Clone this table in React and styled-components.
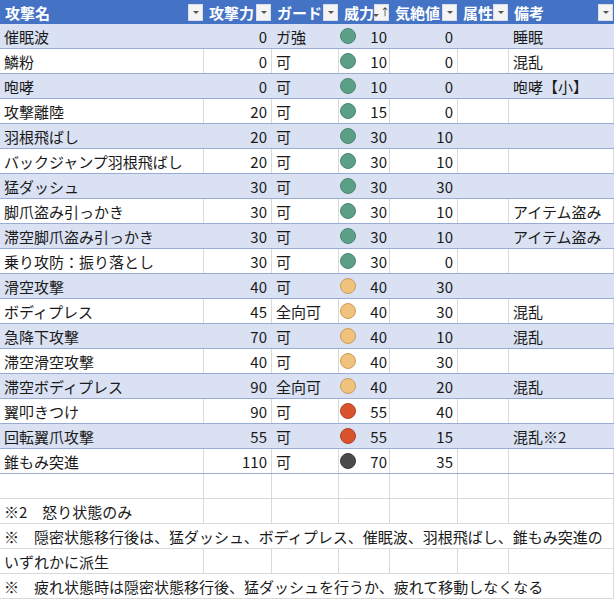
import React from "react";
import styled, { createGlobalStyle } from "styled-components";

const GlobalStyle = createGlobalStyle`
  body {
    margin: 0;
    background: #fff;
    font-family: "Noto Sans CJK JP", "Noto Sans", sans-serif;
  }
`;

const COLS = "204px 68px 67px 51px 68px 51px 105px";

const Sheet = styled.div`
  width: 614px;
  height: 600px;
  overflow: hidden;
  font-size: 15px;
  color: #1a1a1a;
`;

const HeaderRow = styled.div`
  display: grid;
  grid-template-columns: ${COLS};
  height: 24px;
  background: #4472c4;
`;

const HeadCell = styled.div`
  display: flex;
  align-items: center;
  justify-content: space-between;
  padding: 0 1px 0 5px;
  color: #fff;
  font-weight: bold;
  white-space: nowrap;
  overflow: hidden;
`;

const FilterButton = styled.span`
  flex: none;
  width: 15px;
  height: 17px;
  background: #f4f4f4;
  border: 1px solid #d8dde8;
  box-sizing: border-box;
  display: flex;
  align-items: center;
  justify-content: center;
  gap: 1px;
`;

const Tri = styled.span`
  width: 0;
  height: 0;
  border-left: 3px solid transparent;
  border-right: 3px solid transparent;
  border-top: 3px solid #555;
  margin-top: ${(p) => (p.$sort ? "6px" : "1px")};
`;

const SortArrow = styled.span`
  font-size: 10px;
  line-height: 1;
  color: #333;
  font-weight: normal;
  margin-top: -1px;
`;

const Row = styled.div`
  display: grid;
  grid-template-columns: ${COLS};
  height: 25px;
  box-sizing: border-box;
  background: ${(p) => (p.$band ? "#d9e1f2" : "#fff")};
  border-bottom: 1px solid ${(p) => (p.$plain ? "#d9d9d9" : "#98acd6")};
`;

const Cell = styled.div`
  display: flex;
  align-items: center;
  justify-content: ${(p) => (p.$num ? "flex-end" : "flex-start")};
  padding: 0 4px;
  white-space: nowrap;
  overflow: hidden;
  border-right: 1px solid ${(p) => (p.$band ? "transparent" : "#d9d9d9")};
  grid-column: ${(p) => p.$span || "auto"};
`;

const PowerCell = styled(Cell)`
  justify-content: space-between;
  padding: 0 2px 0 1px;
`;

const Dot = styled.span`
  width: 16px;
  height: 16px;
  border-radius: 50%;
  box-sizing: border-box;
  background: ${(p) => p.$fill};
  border: 1px solid ${(p) => p.$edge};
`;

const DOTS = {
  g: ["#5c9f87", "#4b8770"],
  y: ["#f1c27d", "#c99d5a"],
  r: ["#d9532f", "#b04325"],
  k: ["#4b4b4b", "#3a3a3a"],
};

const heads = ["攻撃名", "攻撃力", "ガード", "威力", "気絶値", "属性", "備考"];

const rows = [
  ["催眠波", 0, "ガ強", "g", 10, 0, "睡眠"],
  ["鱗粉", 0, "可", "g", 10, 0, "混乱"],
  ["咆哮", 0, "可", "g", 10, 0, "咆哮【小】"],
  ["攻撃離陸", 20, "可", "g", 15, 0, ""],
  ["羽根飛ばし", 20, "可", "g", 30, 10, ""],
  ["バックジャンプ羽根飛ばし", 20, "可", "g", 30, 10, ""],
  ["猛ダッシュ", 30, "可", "g", 30, 30, ""],
  ["脚爪盗み引っかき", 30, "可", "g", 30, 10, "アイテム盗み"],
  ["滞空脚爪盗み引っかき", 30, "可", "g", 30, 10, "アイテム盗み"],
  ["乗り攻防：振り落とし", 30, "可", "g", 30, 0, ""],
  ["滑空攻撃", 40, "可", "y", 40, 30, ""],
  ["ボディプレス", 45, "全向可", "y", 40, 30, "混乱"],
  ["急降下攻撃", 70, "可", "y", 40, 10, "混乱"],
  ["滞空滑空攻撃", 40, "可", "y", 40, 30, ""],
  ["滞空ボディプレス", 90, "全向可", "y", 40, 20, "混乱"],
  ["翼叩きつけ", 90, "可", "r", 55, 40, ""],
  ["回転翼爪攻撃", 55, "可", "r", 55, 15, "混乱※2"],
  ["錐もみ突進", 110, "可", "k", 70, 35, ""],
];

// null = text spills across the whole row
const notes = [
  "",
  "※2　怒り状態のみ",
  null,
  "いずれかに派生",
  null,
];
const longNotes = [
  "※　隠密状態移行後は、猛ダッシュ、ボディプレス、催眠波、羽根飛ばし、錐もみ突進の",
  "※　疲れ状態時は隠密状態移行後、猛ダッシュを行うか、疲れて移動しなくなる",
];

const EmptyCells = () =>
  heads.slice(1).map((h) => <Cell key={h} />);

export default function App() {
  let li = 0;
  return (
    <Sheet>
      <GlobalStyle />
      <HeaderRow>
        {heads.map((h) => (
          <HeadCell key={h}>
            {h}
            <FilterButton>
              <Tri $sort={h === "威力"} />
              {h === "威力" && <SortArrow>↑</SortArrow>}
            </FilterButton>
          </HeadCell>
        ))}
      </HeaderRow>
      {rows.map(([name, atk, guard, dot, pow, stun, note], i) => {
        const band = i % 2 === 0;
        return (
          <Row key={name} $band={band} $plain={false}>
            <Cell $band={band}>{name}</Cell>
            <Cell $band={band} $num>{atk}</Cell>
            <Cell $band={band}>{guard}</Cell>
            <PowerCell $band={band}>
              <Dot $fill={DOTS[dot][0]} $edge={DOTS[dot][1]} />
              {pow}
            </PowerCell>
            <Cell $band={band} $num>{stun}</Cell>
            <Cell $band={band} />
            <Cell $band={band}>{note}</Cell>
          </Row>
        );
      })}
      {notes.map((n, i) =>
        n === null ? (
          <Row key={i} $plain>
            <Cell $span="1 / -1">{longNotes[li++]}</Cell>
          </Row>
        ) : (
          <Row key={i} $plain>
            <Cell>{n}</Cell>
            <EmptyCells />
          </Row>
        )
      )}
    </Sheet>
  );
}
